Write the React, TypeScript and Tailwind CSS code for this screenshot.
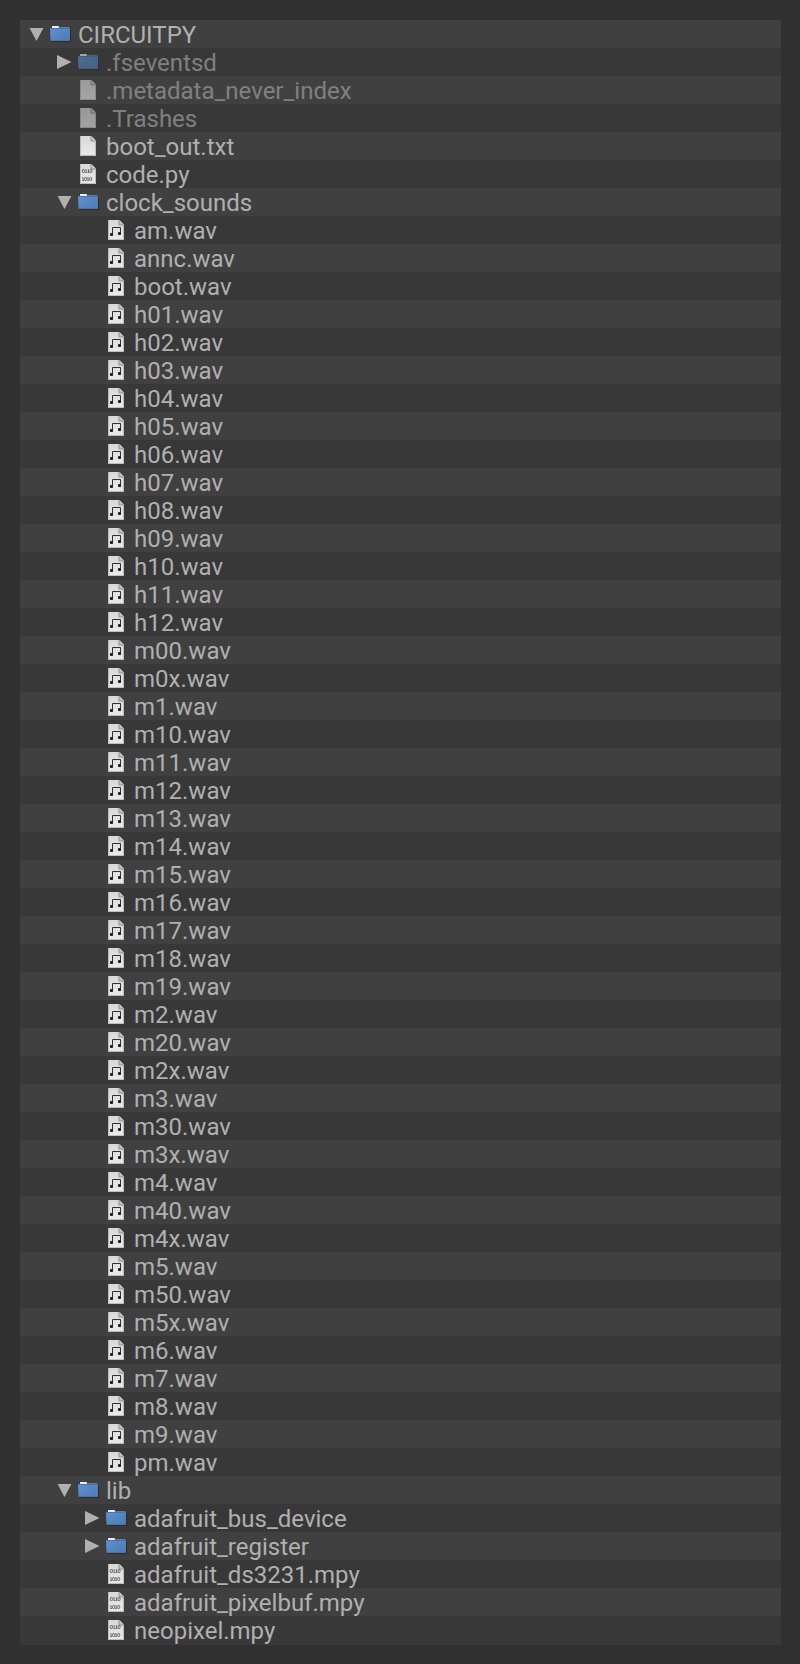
import { useState } from "react";

type Kind = "folder" | "blank" | "binary" | "audio";

interface Entry {
  name: string;
  kind: Kind;
  dim?: boolean;
  children?: Entry[];
}

interface Row {
  entry: Entry;
  path: string;
  depth: number;
}

const sounds = [
  "am", "annc", "boot",
  "h01", "h02", "h03", "h04", "h05", "h06", "h07", "h08", "h09", "h10", "h11", "h12",
  "m00", "m0x", "m1", "m10", "m11", "m12", "m13", "m14", "m15", "m16", "m17", "m18", "m19",
  "m2", "m20", "m2x", "m3", "m30", "m3x", "m4", "m40", "m4x", "m5", "m50", "m5x",
  "m6", "m7", "m8", "m9", "pm",
];

const drive: Entry = {
  name: "CIRCUITPY",
  kind: "folder",
  children: [
    { name: ".fseventsd", kind: "folder", dim: true, children: [] },
    { name: ".metadata_never_index", kind: "blank", dim: true },
    { name: ".Trashes", kind: "blank", dim: true },
    { name: "boot_out.txt", kind: "blank" },
    { name: "code.py", kind: "binary" },
    {
      name: "clock_sounds",
      kind: "folder",
      children: sounds.map((s): Entry => ({ name: `${s}.wav`, kind: "audio" })),
    },
    {
      name: "lib",
      kind: "folder",
      children: [
        { name: "adafruit_bus_device", kind: "folder", children: [] },
        { name: "adafruit_register", kind: "folder", children: [] },
        { name: "adafruit_ds3231.mpy", kind: "binary" },
        { name: "adafruit_pixelbuf.mpy", kind: "binary" },
        { name: "neopixel.mpy", kind: "binary" },
      ],
    },
  ],
};

const indents = ["pl-[9px]", "pl-[37px]", "pl-[65px]"];

function listRows(entry: Entry, open: Set<string>, depth = 0, parent = ""): Row[] {
  const path = `${parent}/${entry.name}`;
  const rows: Row[] = [{ entry, path, depth }];
  if (entry.children && open.has(path)) {
    for (const child of entry.children) rows.push(...listRows(child, open, depth + 1, path));
  }
  return rows;
}

function FolderIcon() {
  return (
    <svg viewBox="0 0 21 18" className="h-[18px] w-[21px]" aria-hidden="true">
      <path d="M2 16.5h18.6v-12" fill="none" stroke="#292b2e" strokeWidth="1" />
      <path d="M2 4V1.8q0-.7.7-.7h5.6q.7 0 .7.7v.5h9.6q.8 0 .8.8V4z" fill="#8b8d8f" />
      <path d="M2 3.2V1.6q0-.6.6-.6h5.6q.6 0 .6.6v1.600z" fill="#eeeeec" />
      <path d="M1 3h18q1 0 1 1v11q0 1-1 1H1.600q-1 0-1.100-1L0 4q0-1 1-1z" fill="url(#folder-face)" />
      <path d="M.6 3.500h19" stroke="#4674ad" strokeWidth="1" />
      <path d="M1 15.500h18.500" stroke="#4876b0" strokeWidth="1" />
    </svg>
  );
}

function FileIcon({ kind }: { kind: Kind }) {
  return (
    <svg viewBox="0 0 16 20" className="h-5 w-4" aria-hidden="true">
      <path d="M0 0h11l5 5v15H0z" fill="url(#page-face)" />
      <path d="M10.500 0 16 5.500h-4.500q-1 0-1-1z" fill="#8f8f8f" />
      <path d="M11.500 0 16 4.500h-4.500z" fill="#c4c4c4" />
      <path d="M.5 0v19.500h15V5" fill="none" stroke="#a9a9a9" strokeWidth="0.700" />
      {kind === "binary" && (
        <g fill="none" stroke="#555555" strokeWidth="0.800">
          <rect x="2.400" y="5.500" width="2" height="3" rx="0.600" />
          <path d="M5.300 6l.9-.5v3M5.400 8.500h1.700M7.600 6l.9-.5v3M7.700 8.500h1.700" />
          <rect x="10" y="5.500" width="2" height="3" rx="0.600" />
          <path d="M2.200 14l.9-.5v3M2.200 16.500H4M7.300 14l.9-.5v3M7.300 16.500H9" />
          <rect x="4.600" y="13.500" width="2" height="3" rx="0.600" />
          <rect x="9.700" y="13.500" width="2" height="3" rx="0.600" />
        </g>
      )}
      {kind === "audio" && (
        <g>
          <path d="M4.500 15V7.500h8V14" fill="none" stroke="#303030" strokeWidth="1" />
          <rect x="2" y="13" width="3" height="3" rx="0.800" fill="#202020" />
          <rect x="10" y="12" width="3" height="3" rx="0.800" fill="#202020" />
        </g>
      )}
    </svg>
  );
}

function Disclosure({ open }: { open: boolean }) {
  return (
    <svg viewBox="0 0 16 16" className="h-4 w-4" aria-hidden="true">
      <path d={open ? "M.6 2h13.800L7.500 15z" : "M0 1v14l14.500-7z"} fill="#b0b0b0" />
    </svg>
  );
}

export default function App() {
  const [open, setOpen] = useState(
    () => new Set(["/CIRCUITPY", "/CIRCUITPY/clock_sounds", "/CIRCUITPY/lib"]),
  );

  const toggle = (path: string) =>
    setOpen((current) => {
      const next = new Set(current);
      if (!next.delete(path)) next.add(path);
      return next;
    });

  return (
    <main className="min-h-screen bg-[#303030] pt-5 pr-[19px] pb-[19px] pl-5 font-[Roboto,sans-serif] text-2xl leading-7 text-[#b0b0b0]">
      <svg className="absolute h-0 w-0" aria-hidden="true">
        <defs>
          <linearGradient id="folder-face" x1="0" y1="0" x2="1" y2="1">
            <stop offset="0" stopColor="#6092d0" />
            <stop offset="1" stopColor="#4c7ab4" />
          </linearGradient>
          <linearGradient id="page-face" x1="0" y1="0" x2="0" y2="1">
            <stop offset="0" stopColor="#d8d8d8" />
            <stop offset="1" stopColor="#eaeaea" />
          </linearGradient>
        </defs>
      </svg>
      <ul className="bg-[#383838] pb-px">
        {listRows(drive, open).map(({ entry, path, depth }) => (
          <li
            key={path}
            className={`flex h-7 items-center odd:bg-[#404040] even:bg-[#383838] ${indents[depth]}`}
          >
            <span className="flex w-[21px] shrink-0">
              {entry.children && (
                <button
                  type="button"
                  aria-label={entry.name}
                  aria-expanded={open.has(path)}
                  onClick={() => toggle(path)}
                >
                  <Disclosure open={open.has(path)} />
                </button>
              )}
            </span>
            <span className={`flex w-7 shrink-0 ${entry.dim ? "opacity-60" : ""} ${entry.kind === "folder" ? "" : "pl-0.5"}`}>
              {entry.kind === "folder" ? <FolderIcon /> : <FileIcon kind={entry.kind} />}
            </span>
            <span className={entry.dim ? "pt-0.5 text-[#808080]" : "pt-0.5"}>{entry.name}</span>
          </li>
        ))}
      </ul>
    </main>
  );
}
